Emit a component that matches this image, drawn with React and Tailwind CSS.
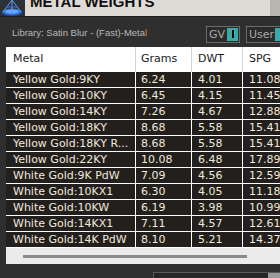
import React from "react";

const rows = [
  ["Yellow Gold:9KY", "6.24", "4.01", "11.08"],
  ["Yellow Gold:10KY", "6.45", "4.15", "11.45"],
  ["Yellow Gold:14KY", "7.26", "4.67", "12.88"],
  ["Yellow Gold:18KY", "8.68", "5.58", "15.41"],
  ["Yellow Gold:18KY R...", "8.68", "5.58", "15.41"],
  ["Yellow Gold:22KY", "10.08", "6.48", "17.89"],
  ["White Gold:9K PdW", "7.09", "4.56", "12.59"],
  ["White Gold:10KX1", "6.30", "4.05", "11.18"],
  ["White Gold:10KW", "6.19", "3.98", "10.99"],
  ["White Gold:14KX1", "7.11", "4.57", "12.61"],
  ["White Gold:14K PdW", "8.10", "5.21", "14.37"],
];

const cols = "grid grid-cols-[130px_56px_51px_60px]";

const Logo = () => (
  <svg width="25" height="16" viewBox="0 0 25 16">
    <rect width="25" height="16" fill="#2c3038" />
    <ellipse cx="12" cy="12" rx="10" ry="3.5" fill="#2f6fe0" />
    <ellipse cx="12" cy="11.5" rx="7" ry="2" fill="#6aa8ff" />
    <path d="M12 0 L3 12 M12 0 L21 12 M12 0 L12 12" stroke="#5f9cf5" strokeWidth="1" fill="none" />
    <path d="M7 7 L17 7" stroke="#3d7be8" strokeWidth="1" />
  </svg>
);

const Toggle = ({ label, width }) => (
  <div className={`flex items-center shrink-0 h-[17px] border border-[#6b6b6b] bg-[#2a2a2a] pl-[2px] ${width}`}>
    <span className="text-[11px] text-[#a9a9a9] leading-none flex-1">{label}</span>
    <div className="w-[11px] h-[13px] bg-[#3aa9a9] flex items-center justify-center mr-[1px]">
      <div className="w-[2px] h-[8px] bg-black" />
    </div>
  </div>
);

export default function App() {
  return (
    <div className="w-[280px] h-[278px] bg-[#2f2f2f] overflow-hidden flex flex-col" style={{ fontFamily: "'DejaVu Sans', Verdana, sans-serif" }}>
      <div className="flex h-[16px] shrink-0">
        <Logo />
        <div className="flex-1 bg-[#dedad6] overflow-hidden pl-[5px]">
          <div className="text-[15px] font-bold leading-none mt-[-6px] text-[#111]" style={{ fontFamily: "'Liberation Sans', Arial, sans-serif" }}>
            METAL WEIGHTS
          </div>
        </div>
        <div className="w-[10px] bg-[#b8b4b0]" />
      </div>
      <div className="h-[1px] bg-[#1f1f1f]" />
      <div className="flex items-center h-[30px] pl-[12px]">
        <div className="text-[9.5px] text-[#b9b9b9] flex-1 min-w-0 whitespace-nowrap mt-[3px]" style={{ fontFamily: "'Liberation Sans', Arial, sans-serif" }}>
          Library: Satin Blur - (Fast)-Meta<span className="text-[#c98a44]">l</span>
        </div>
        <div className="flex gap-[6px] mt-[4px] shrink-0 w-[74px]">
          <Toggle label="GV" width="w-[34px]" />
          <Toggle label="User" width="w-[42px]" />
        </div>
      </div>
      <div className="ml-[6px] overflow-hidden">
        <div className={`${cols} h-[25px] bg-white text-[11px] text-[#1a1a1a] items-center`}>
          <div className="pl-[7px] h-full flex items-center border-r border-[#d4d4d4]">Metal</div>
          <div className="pl-[5px] h-full flex items-center border-r border-[#d4d4d4]">Grams</div>
          <div className="pl-[6px] h-full flex items-center border-r border-[#d4d4d4]">DWT</div>
          <div className="pl-[6px] h-full flex items-center">SPG</div>
        </div>
        {rows.map((r, i) => (
          <div key={i} className={`${cols} h-[16px] bg-[#231f1d] border-b border-white text-[11px] text-[#efe9dc] leading-none`}>
            <div className="pl-[7px] flex items-center border-r border-white whitespace-nowrap overflow-hidden">{r[0]}</div>
            <div className="pl-[5px] flex items-center border-r border-white">{r[1]}</div>
            <div className="pl-[6px] flex items-center border-r border-white">{r[2]}</div>
            <div className="pl-[6px] flex items-center whitespace-nowrap">{r[3]}</div>
          </div>
        ))}
        <div className="h-[16px] bg-[#ebebeb] flex items-center">
          <div className="ml-[17px] w-[224px] h-[3px] bg-[#8a8a8a]" />
        </div>
      </div>
      <div className="flex-1 flex items-end">
        <div className="ml-[153px] flex-1 h-[6px] border-t border-l border-[#5a5a5a] bg-[#262626] flex justify-end">
          <div className="w-[12px] h-full bg-[#9a9a9a]" />
        </div>
      </div>
    </div>
  );
}
